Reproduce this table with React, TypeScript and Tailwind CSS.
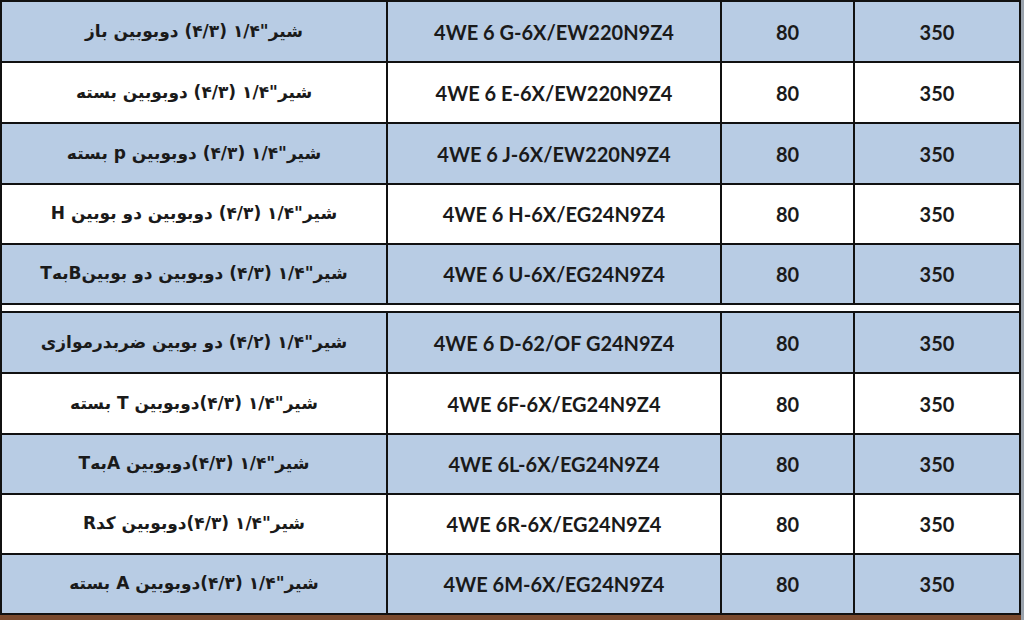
import React from 'react';

type Row = { fa: string; model: string; blue: boolean; h: string };

const top: Row[] = [
  { fa: 'شیر"۱/۴ (۴/۳) دوبوبین باز', model: '4WE 6 G-6X/EW220N9Z4', blue: true, h: 'h-[61px]' },
  { fa: 'شیر"۱/۴ (۴/۳) دوبوبین بسته', model: '4WE 6 E-6X/EW220N9Z4', blue: false, h: 'h-[61px]' },
  { fa: 'شیر"۱/۴ (۴/۳) دوبوبین p بسته', model: '4WE 6 J-6X/EW220N9Z4', blue: true, h: 'h-[61px]' },
  { fa: 'شیر"۱/۴ (۴/۳) دوبوبین دو بوبین H', model: '4WE 6 H-6X/EG24N9Z4', blue: false, h: 'h-[60px]' },
  { fa: 'شیر"۱/۴ (۴/۳) دوبوبین دو بوبینBبهT', model: '4WE 6 U-6X/EG24N9Z4', blue: true, h: 'h-[60px]' },
];

const bottom: Row[] = [
  { fa: 'شیر"۱/۴ (۴/۲) دو بوبین ضربدرموازی', model: '4WE 6 D-62/OF G24N9Z4', blue: true, h: 'h-[61px]' },
  { fa: 'شیر"۱/۴ (۴/۳)دوبوبین T بسته', model: '4WE 6F-6X/EG24N9Z4', blue: false, h: 'h-[61px]' },
  { fa: 'شیر"۱/۴ (۴/۳)دوبوبین AبهT', model: '4WE 6L-6X/EG24N9Z4', blue: true, h: 'h-[60px]' },
  { fa: 'شیر"۱/۴ (۴/۳)دوبوبین کدR', model: '4WE 6R-6X/EG24N9Z4', blue: false, h: 'h-[60px]' },
  { fa: 'شیر"۱/۴ (۴/۳)دوبوبین A بسته', model: '4WE 6M-6X/EG24N9Z4', blue: true, h: 'h-[60px]' },
];

function TableRow({ row }: { row: Row }) {
  const bg = row.blue ? 'bg-[#b8cce4]' : 'bg-white';
  return (
    <div className={`grid grid-cols-[386px_334px_133px_164px] border-b-2 border-[#111] ${row.h} ${bg}`}>
      <div
        dir="rtl"
        className="flex items-center justify-center border-r-2 border-[#111] font-['DejaVu_Sans',sans-serif] text-[17px] font-bold text-[#1a1a1a]"
      >
        {row.fa}
      </div>
      <div className="flex items-center justify-center border-r-2 border-[#111] text-[20px] font-bold">
        {row.model}
      </div>
      <div className="flex items-center justify-center border-r-2 border-[#111] text-[20px] font-bold">
        80
      </div>
      <div className="flex items-center justify-center text-[20px] font-bold">350</div>
    </div>
  );
}

export default function App() {
  return (
    <div className="flex h-[620px] w-[1024px] overflow-hidden bg-white font-['Lato',sans-serif] text-[#1a1a1a]">
      <div className="flex w-[1021px] flex-col">
        <div className="border-x-2 border-t-2 border-[#111]">
          {top.map((r) => (
            <TableRow key={r.model} row={r} />
          ))}
        </div>
        <div className="h-[6px] border-x-2 border-[#111] bg-white" />
        <div className="border-x-2 border-t-2 border-[#111]">
          {bottom.map((r) => (
            <TableRow key={r.model} row={r} />
          ))}
        </div>
        <div className="flex-1 bg-[#7a4a2e]" />
      </div>
      <div className="w-[3px] bg-[#9aa3ad]" />
    </div>
  );
}
